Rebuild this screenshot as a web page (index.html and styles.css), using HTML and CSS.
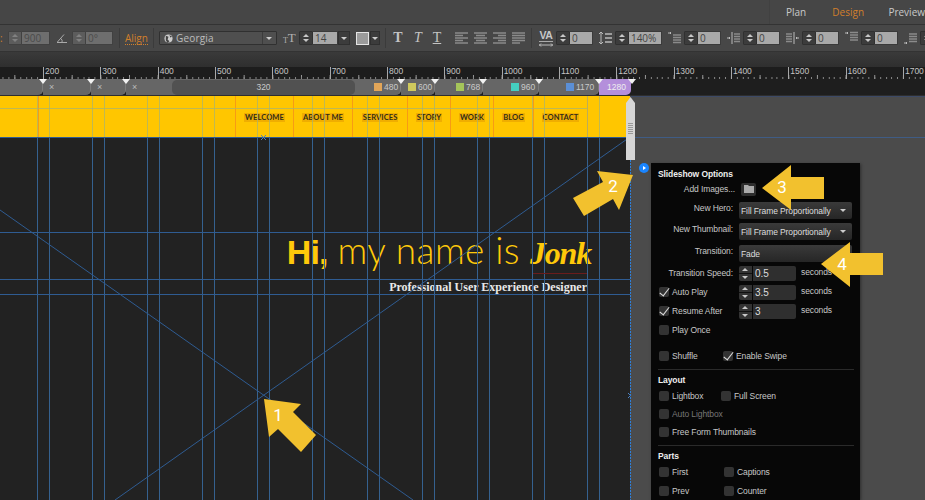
FILE: index.html
```html
<!DOCTYPE html>
<html lang="en">
<head>
<meta charset="utf-8">
<title>Slideshow Options</title>
<link rel="stylesheet" href="styles.css">
</head>
<body>
<div class="app">
  <header class="topbar">
    <nav class="modes">
      <span class="mode mode-plan">Plan</span>
      <span class="mode mode-design">Design</span>
      <span class="mode mode-preview">Preview</span>
    </nav>
  </header>

  <div class="toolbar">
    <span class="orange-label">:</span>
    <span class="spin spin-dim"></span><span class="field field-dim w-28">900</span>
    <svg class="ico ml-7 i-10" viewBox="0 0 10 10"><path d="M0 9.500h10M0 9.500l7-8M5 9.500a4 4 0 0 0-1-4" fill="none" stroke="#aaa"/></svg>
    <span class="spin spin-dim ml-5"></span><span class="field field-dim w-27">0°</span>
    <span class="sep ml-6"></span>
    <span class="align-link ml-5">Align</span>
    <span class="sep ml-5"></span>
    <div class="font-select ml-5">
      <svg class="globe" viewBox="0 0 10 10"><circle cx="5" cy="5" r="4.500" fill="#ccc"/><path d="M2 2l3 1-1 3 2 2-2 2-2-3zM6 1l3 2-2 1z" fill="#444"/></svg>
      <span class="font-name">Georgia</span>
      <span class="font-caret"><i class="caret"></i></span>
    </div>
    <span class="tt-icon ml-6"><b class="tt-small">T</b><b class="tt-big">T</b></span>
    <span class="spin ml-3"></span><span class="field w-25">14</span><span class="drop"><i class="caret"></i></span>
    <span class="swatch ml-6"></span><span class="drop drop-small ml-1"><i class="caret"></i></span>
    <span class="sep ml-5"></span>
    <span class="type-t ml-6 type-bold">T</span>
    <span class="type-t ml-8 type-italic">T</span>
    <span class="type-t ml-7 type-under">T</span>
    <svg class="align-ico ml-12" viewBox="0 0 13 13"><path d="M0 1h13M0 3.500h8M0 6h13M0 8.500h8M0 11h13" stroke="#8b8b8b" stroke-width="1.500"/></svg>
    <svg class="align-ico ml-6" viewBox="0 0 13 13"><path d="M0 1h13M2 3.500h9M0 6h13M2 8.500h9M0 11h13" stroke="#8b8b8b" stroke-width="1.500"/></svg>
    <svg class="align-ico ml-6" viewBox="0 0 13 13"><path d="M0 1h13M5 3.500h8M0 6h13M5 8.500h8M0 11h13" stroke="#8b8b8b" stroke-width="1.500"/></svg>
    <svg class="align-ico ml-6" viewBox="0 0 13 13"><path d="M0 1h13M0 3.500h13M0 6h13M0 8.500h13M0 11h8" stroke="#8b8b8b" stroke-width="1.500"/></svg>
    <span class="sep ml-6"></span>
    <span class="va-icon ml-7"><span class="va-text">VA</span><svg class="va-arrow" viewBox="0 0 14 4"><path d="M0 2h14M2 .5L.5 2 2 3.500M12 .5L13.500 2 12 3.500" fill="none" stroke="#bbb"/></svg></span>
    <span class="spin ml-3"></span><span class="field w-23">0</span>
    <svg class="para-ico ml-6" viewBox="0 0 13 14"><path d="M2 1v12M0 3l2-2 2 2M0 11l2 2 2-2" fill="none" stroke="#bbb"/><path d="M6 3h7M6 7h7M6 11h7" stroke="#bbb" stroke-width="1.300"/></svg>
    <span class="spin ml-3"></span><span class="field w-33">140%</span>
    <svg class="para-ico ml-6" viewBox="0 0 13 14"><path d="M0 2h3M2 1l1 1-1 1" fill="none" stroke="#bbb"/><path d="M5 4h8M5 6.500h8M5 9h8M5 11.500h8" stroke="#8b8b8b" stroke-width="1.400"/></svg>
    <span class="spin ml-3"></span><span class="field w-23">0</span>
    <svg class="para-ico ml-6" viewBox="0 0 13 14"><path d="M0 7h3M2 6l1 1-1 1M5 1v12" fill="none" stroke="#bbb"/><path d="M7 3h6M7 5.500h6M7 8h6M7 10.500h6" stroke="#8b8b8b" stroke-width="1.400"/></svg>
    <span class="spin ml-3"></span><span class="field w-23">0</span>
    <svg class="para-ico ml-6" viewBox="0 0 13 14"><path d="M13 7h-3M11 6l-1 1 1 1M8 1v12" fill="none" stroke="#bbb"/><path d="M0 3h6M0 5.500h6M0 8h6M0 10.500h6" stroke="#8b8b8b" stroke-width="1.400"/></svg>
    <span class="spin ml-3"></span><span class="field w-23">0</span>
    <svg class="para-ico ml-6" viewBox="0 0 13 14"><path d="M0 2h3M2 1l1 1-1 1" fill="none" stroke="#bbb"/><path d="M5 1.500h8M5 4h8M5 6.500h8M5 9h8" stroke="#8b8b8b" stroke-width="1.400"/></svg>
    <span class="spin ml-3"></span><span class="field w-23">0</span>
    <svg class="para-ico ml-6" viewBox="0 0 13 14"><path d="M0 12h3M2 11l1 1-1 1" fill="none" stroke="#bbb"/><path d="M5 3h8M5 5.500h8M5 8h8M5 10.500h8" stroke="#8b8b8b" stroke-width="1.400"/></svg>
    <span class="spin ml-3"></span>
  </div>

  <div class="subbar"></div>

  <div class="ruler">
    <span class="mark">200</span><span class="mark">300</span><span class="mark">400</span><span class="mark">500</span>
    <span class="mark">600</span><span class="mark">700</span><span class="mark">800</span><span class="mark">900</span>
    <span class="mark">1000</span><span class="mark">1100</span><span class="mark">1200</span><span class="mark">1300</span>
    <span class="mark">1400</span><span class="mark">1500</span><span class="mark">1600</span><span class="mark">1700</span>
  </div>

  <div class="breakpoints">
    <div class="bp bp-lead"></div>
    <div class="bp bp-a"><span class="bp-x">×</span></div>
    <div class="bp bp-b"><span class="bp-x">×</span></div>
    <div class="bp bp-c"><span class="bp-x">×</span><span class="pill">320</span><i class="sw sw-480"></i><span class="bp-num">480</span></div>
    <div class="bp bp-d"><i class="sw sw-600"></i><span class="bp-num">600</span></div>
    <div class="bp bp-e"><i class="sw sw-768"></i><span class="bp-num">768</span></div>
    <div class="bp bp-f"><i class="sw sw-960"></i><span class="bp-num">960</span></div>
    <div class="bp bp-g"><i class="sw sw-1170"></i><span class="bp-num">1170</span></div>
    <div class="bp bp-h"><span class="bp-num">1280</span></div>
    <div class="bp-rest"></div>
  </div>

  <main class="workspace">
    <section class="canvas">
      <div class="site-header">
        <span></span>
        <span class="nav-cell"></span>
        <span class="nav-cell"><b>WELCOME</b></span>
        <span class="nav-cell"><b>ABOUT ME</b></span>
        <span class="nav-cell"><b>SERVICES</b></span>
        <span class="nav-cell"><b>STORY</b></span>
        <span class="nav-cell"><b>WORK</b></span>
        <span class="nav-cell"><b>BLOG</b></span>
        <span class="nav-cell"><b>CONTACT</b></span>
        <span class="nav-cell"></span>
      </div>
      <div class="hero">
        <h1 class="hero-title"><strong class="hero-hi">Hi,</strong> <span class="hero-light">my name is</span> <em class="hero-name">Jonk</em></h1>
        <p class="hero-sub">Professional User Experience Designer</p>
      </div>
      <svg class="guides" width="631" height="404" viewBox="0 0 631 404">
        <path class="col-top" d="M37.500 0V41M49.500 0V41M92.500 0V41M104.500 0V41M147.500 0V41M159.500 0V41M202.500 0V41M214.500 0V41M257.500 0V41M269.500 0V41M312.500 0V41M324.500 0V41M367.500 0V41M379.500 0V41M422.500 0V41M434.500 0V41M477.500 0V41M489.500 0V41M532.500 0V41M544.500 0V41M587.500 0V41M599.500 0V41"/>
        <path class="col-main" d="M37.500 41V404M49.500 41V404M92.500 41V404M104.500 41V404M147.500 41V404M159.500 41V404M202.500 41V404M214.500 41V404M257.500 41V404M269.500 41V404M312.500 41V404M324.500 41V404M367.500 41V404M379.500 41V404M422.500 41V404M434.500 41V404M477.500 41V404M489.500 41V404M532.500 41V404M544.500 41V404M587.500 41V404M599.500 41V404"/>
        <path class="col-top" d="M0 12.500H587"/>
        <path class="line" d="M0 41.500H630M0 136.500H630M0 183.500H630M0 198.500H630"/>
        <path class="line" d="M0 114L413 404M115 404L630 41"/>
        <path class="line-red" d="M533 177.500H587"/>
        <path class="line-x" d="M261 39l5 5M266 39l-5 5M628 297l5 5M633 297l-5 5"/>
        <path class="line-edge" d="M630.500 64V404"/>
      </svg>
    </section>

    <aside class="side">
      <div class="options">
        <h2 class="opt-title">Slideshow Options</h2>
        <div class="opt-row opt-add">
          <span class="opt-label">Add Images...</span>
          <span class="folder-btn"><svg viewBox="0 0 10 8" class="folder"><path d="M0 0h4l1 1h5v7H0z" fill="#aaa"/></svg></span>
        </div>
        <div class="opt-row opt-sel"><span class="opt-label">New Hero:</span><span class="select">Fill Frame Proportionally<i class="caret"></i></span></div>
        <div class="opt-row opt-sel gap-4"><span class="opt-label">New Thumbnail:</span><span class="select">Fill Frame Proportionally<i class="caret"></i></span></div>
        <div class="opt-row opt-sel"><span class="opt-label">Transition:</span><span class="select">Fade<i class="caret"></i></span></div>
        <div class="opt-row opt-num gap-4"><span class="opt-label">Transition Speed:</span><span class="spin spin-black"></span><span class="num">0.5</span><span class="unit">seconds</span></div>
        <div class="opt-row opt-num gap-4"><span class="check-label"><i class="box on"></i>Auto Play</span><span class="spin spin-black"></span><span class="num">3.5</span><span class="unit">seconds</span></div>
        <div class="opt-row opt-num gap-4"><span class="check-label"><i class="box on"></i>Resume After</span><span class="spin spin-black"></span><span class="num">3</span><span class="unit">seconds</span></div>
        <div class="check-row gap-3"><span class="check-label"><i class="box"></i>Play Once</span></div>
        <div class="check-row gap-10"><span class="check-label col-64"><i class="box"></i>Shuffle</span><span class="check-label"><i class="box on"></i>Enable Swipe</span></div>
        <hr class="rule">
        <h2 class="opt-title sec">Layout</h2>
        <div class="check-row"><span class="check-label col-62"><i class="box"></i>Lightbox</span><span class="check-label"><i class="box"></i>Full Screen</span></div>
        <div class="check-row gap-2 dim"><span class="check-label"><i class="box"></i>Auto Lightbox</span></div>
        <div class="check-row gap-2"><span class="check-label"><i class="box"></i>Free Form Thumbnails</span></div>
        <hr class="rule">
        <h2 class="opt-title sec">Parts</h2>
        <div class="check-row"><span class="check-label col-65"><i class="box"></i>First</span><span class="check-label"><i class="box"></i>Captions</span></div>
        <div class="check-row gap-3"><span class="check-label col-65"><i class="box"></i>Prev</span><span class="check-label"><i class="box"></i>Counter</span></div>
      </div>
    </aside>

    <div class="handle"><span class="grip"></span></div>
    <span class="dot"></span>
  </main>

  <svg class="callouts" width="925" height="500" viewBox="0 0 925 500">
    <polygon points="264,399 301,404 293,412 316,435 301,452 278,429 269,437"/>
    <polygon points="633,175 597,171 603,182 573,198 584,216 613,199 619,210"/>
    <polygon points="762,188 791,165 791,177 824,177 824,199 791,199 791,210"/>
    <polygon points="821,264 850,242 850,253 883,253 883,275 850,275 850,287"/>
    <text x="278" y="421">1</text>
    <text x="613" y="192">2</text>
    <text x="782" y="193">3</text>
    <text x="842" y="270">4</text>
  </svg>
</div>
</body>
</html>
```
FILE: styles.css
```css
* { box-sizing: border-box; }
html, body { margin: 0; padding: 0; }
body { width: 925px; height: 500px; overflow: hidden; background: #4b4b4b; font-family: "Open Sans", "Liberation Sans", sans-serif; }
.app { position: relative; width: 925px; height: 500px; overflow: hidden; }
i { display: block; font-style: normal; }

/* top bar */
.topbar { height: 25px; background: #464646; border-bottom: 1px solid #333; display: flex; justify-content: flex-end; }
.modes { width: 156px; flex: none; border-left: 1px solid #414141; display: flex; align-items: center; padding-left: 16px; white-space: nowrap; font-size: 10px; }
.mode { color: #c9c9c9; }
.mode-plan { width: 48px; }
.mode-design { width: 58px; color: #d17f2b; }

/* toolbar */
.toolbar { height: 27px; background: #474747; border-bottom: 1px solid #333; display: flex; align-items: center; white-space: nowrap; overflow: hidden; }
.ml-1 { margin-left: 1px; } .ml-3 { margin-left: 3px; } .ml-5 { margin-left: 5px; } .ml-6 { margin-left: 6px; }
.ml-7 { margin-left: 7px; } .ml-8 { margin-left: 8px; } .ml-12 { margin-left: 12px; }
.w-23 { width: 23px; } .w-25 { width: 25px; } .w-27 { width: 27px; } .w-28 { width: 28px; } .w-33 { width: 33px; }
.orange-label { width: 8px; flex: none; color: #d17f2b; font-size: 10px; line-height: 14px; }
.spin { position: relative; flex: none; display: block; width: 14px; height: 14px; background: linear-gradient(#3c3c3c 0 50%, #2c2c2c 50% 53%, #3c3c3c 53%); border: 1px solid #303030; border-radius: 1px; }
.spin::before, .spin::after { content: ""; position: absolute; left: 3px; border-left: 3px solid transparent; border-right: 3px solid transparent; }
.spin::before { top: 2px; border-bottom: 3px solid #c8c8c8; }
.spin::after { bottom: 2px; border-top: 3px solid #c8c8c8; }
.spin-dim { background: linear-gradient(#5c5c5c 0 50%, #3e3e3e 50% 53%, #5c5c5c 53%); border-color: #414141; }
.spin-dim::before { border-bottom-color: #818181; }
.spin-dim::after { border-top-color: #818181; }
.field { flex: none; height: 14px; background: #a9a9a9; color: #444; font-size: 10px; line-height: 13px; padding-left: 2px; border: 1px solid #3a3a3a; border-left: 0; border-radius: 0 1px 1px 0; }
.field-dim { background: #6e6e6e; color: #4b4b4b; border-color: #414141; }
.ico { flex: none; }
.i-10 { width: 10px; height: 10px; }
.sep { flex: none; width: 1px; height: 20px; background: #3b3b3b; }
.align-link { flex: none; color: #d17f2b; font-size: 10px; line-height: 12px; border-bottom: 1px dotted #d17f2b; }
.font-select { flex: none; width: 118px; height: 14px; display: flex; align-items: center; background: #4f4f4f; border: 1px solid #303030; border-radius: 1px; padding-left: 4px; }
.globe { width: 9px; height: 9px; flex: none; }
.font-name { color: #bcbcbc; font-size: 10px; margin-left: 3px; letter-spacing: .2px; flex: 1; }
.font-caret { width: 14px; height: 12px; flex: none; border-left: 1px solid #3c3c3c; display: flex; align-items: center; justify-content: center; }
.caret { width: 0; height: 0; flex: none; border-left: 3px solid transparent; border-right: 3px solid transparent; border-top: 3px solid #ccc; }
.tt-icon { flex: none; width: 13px; height: 14px; display: flex; align-items: flex-end; font-family: "Liberation Serif", serif; color: #b0b0b0; }
.tt-small { font-size: 8px; line-height: 9px; font-weight: 400; }
.tt-big { font-size: 13px; line-height: 14px; font-weight: 400; }
.drop { flex: none; width: 12px; height: 14px; background: #3c3c3c; border: 1px solid #303030; display: flex; align-items: center; justify-content: center; }
.drop-small { width: 10px; }
.swatch { flex: none; width: 13px; height: 13px; background: #9b9b9b; border: 1px solid #e5e5e5; }
.type-t { flex: none; width: 12px; text-align: center; font-family: "Liberation Serif", serif; font-size: 14px; line-height: 14px; color: #c4c4c4; }
.type-bold { font-weight: 700; }
.type-italic { font-style: italic; }
.type-under { text-decoration: underline; text-underline-offset: 1px; }
.align-ico { flex: none; width: 13px; height: 13px; }
.va-icon { flex: none; width: 14px; height: 17px; display: flex; flex-direction: column; }
.va-text { font-family: "Liberation Sans", sans-serif; font-weight: 700; font-size: 10.500px; line-height: 11px; color: #c8c8c8; border-bottom: 1px solid #aaa; letter-spacing: -.4px; text-align: center; }
.va-arrow { width: 14px; height: 4px; margin-top: 1px; }
.para-ico { flex: none; width: 13px; height: 14px; }

.subbar { height: 15px; background: linear-gradient(#3a3a3a, #2f2f2f); }

/* ruler */
.ruler { height: 12px; background-color: #1d1d1d; padding-left: 43px; display: flex; overflow: hidden;
  background-image: repeating-linear-gradient(90deg, #888 0 1px, transparent 1px 5.733px), repeating-linear-gradient(90deg, #999 0 1px, transparent 1px 28.667px);
  background-size: 57.333px 2px, 57.333px 4px; background-position: 43px bottom, 43px bottom; background-repeat: repeat-x; }
.mark { flex: none; width: 57.333px; border-left: 1px solid #a8a8a8; padding-left: 1px; font-size: 8.500px; line-height: 8px; color: #c4c4c4; white-space: nowrap; font-family: "Liberation Sans", sans-serif; }

/* breakpoints */
.breakpoints { height: 17px; display: flex; background: #1e1e1e; border-bottom: 1px solid #2e2e2e; font-size: 8.500px; color: #c9c9c9; font-family: "Liberation Sans", sans-serif; }
.bp { position: relative; flex: none; display: flex; align-items: center; height: 16px; background: #666; border-right: 1px solid #7c7c7c; border-radius: 0 0 5px 0; }
.bp::after { content: ""; position: absolute; z-index: 2; right: -5px; top: 0; border-left: 4.500px solid transparent; border-right: 4.500px solid transparent; border-top: 5px solid #f2f2f2; }
.bp-lead { width: 43px; }
.bp-a { width: 48px; }
.bp-b { width: 35px; }
.bp-c { width: 275px; }
.bp-d { width: 34px; }
.bp-e { width: 48px; }
.bp-f { width: 56px; }
.bp-g { width: 60px; }
.bp-h { width: 32px; background: #b48fdb; color: #eee; border-right: 0; padding-left: 8px; }
.bp-rest { flex: 1; }
.bp-x { width: 46px; padding-left: 6px; font-size: 9px; color: #bbb; flex: none; }
.bp-a .bp-x, .bp-b .bp-x { width: auto; }
.pill { width: 183px; flex: none; height: 15px; line-height: 15px; text-align: center; background: #515151; border-radius: 5px; }
.sw { width: 8px; height: 8px; flex: none; margin-left: 7px; }
.pill + .sw { margin-left: 19px; }
.bp-num { margin-left: 2px; white-space: nowrap; }
.bp-h .bp-num { margin-left: 0; }
.sw-480 { background: #e2a659; }
.sw-600 { background: #cfc95d; }
.sw-768 { background: #a5c55a; margin-left: 21px; }
.sw-960 { background: #45cfc0; margin-left: 28px; }
.sw-1170 { background: #5b8fd6; margin-left: 27px; }

/* workspace */
.workspace { position: relative; height: 404px; display: flex; background: #4b4b4b; }
.canvas { position: relative; flex: none; width: 631px; height: 404px; background: linear-gradient(90deg, #222 0 630px, #4b4b4b 630px); overflow: hidden; }
.site-header { height: 41px; width: 630px; background: #ffc600; display: grid; grid-template-columns: 38px 197px 58px 59px 55px 43px 43px 40px 54px 1fr; }
.nav-cell { display: flex; align-items: center; justify-content: center; padding-top: 2px; border-left: 1px solid #f79b14; }
.nav-cell b { background: #f0ae00; color: #332d1a; font-family: "Lato", sans-serif; font-size: 7.500px; font-weight: 700; letter-spacing: .1px; line-height: 9px; padding: 0 1px; white-space: nowrap; }
.hero { display: flex; flex-direction: column; align-items: flex-end; padding: 92px 40px 0 0; }
.hero-title { margin: 0; display: flex; align-items: baseline; gap: 10px; font-weight: 400; color: #ffc90a; font-size: 37px; line-height: 42px; white-space: nowrap; font-family: "Liberation Sans", sans-serif; }
.hero-hi { font-size: 34px; letter-spacing: -.9px; }
.hero-light { font-family: "Lato", sans-serif; font-weight: 300; letter-spacing: .4px; }
.hero-name { font-family: "Liberation Serif", serif; font-style: italic; font-weight: 700; font-size: 32px; letter-spacing: -1.200px; }
.hero-sub { margin: 5px 4px 0 0; font-family: "Liberation Serif", serif; font-weight: 700; font-size: 12px; line-height: 16px; color: #e8e8e8; }
.guides { position: absolute; left: 0; top: 0; pointer-events: none; }
.col-top { stroke: #a9b36e; stroke-width: 1; fill: none; opacity: .75; }
.col-main { stroke: #35618f; stroke-width: 1; fill: none; shape-rendering: crispEdges; }
.line { stroke: #2f5c92; stroke-width: 1; fill: none; }
.line-red { stroke: #6a1c1c; stroke-width: 1; fill: none; }
.line-x { stroke: #4a80c0; stroke-width: 1; fill: none; }
.line-edge { stroke: #2f7fd8; stroke-width: 1; stroke-dasharray: 2 1; fill: none; }

/* side */
.side { flex: 1; padding-left: 20px; padding-top: 67px; background: linear-gradient(#3d4a66, #3d4a66) 0 0 / 100% 1px no-repeat, linear-gradient(#3f5c85, #3f5c85) 0 41px / 100% 1px no-repeat; }
.options { width: 209px; height: 337px; background: #070707; box-shadow: 1px 1px 3px rgba(0,0,0,.4); padding: 5px 8px 0 7px; font-family: "Liberation Sans", sans-serif; font-size: 8.500px; letter-spacing: -.1px; color: #c8c8c8; overflow: hidden; white-space: nowrap; }
.opt-title { margin: 0; height: 12px; line-height: 12px; font-size: 8.500px; font-weight: 700; color: #eee; }
.opt-title.sec { margin-top: 2px; height: 16px; line-height: 16px; }
.opt-row { display: flex; align-items: center; }
.opt-label { width: 75px; flex: none; text-align: right; }
.opt-add { height: 16px; margin-top: 1px; margin-bottom: 5px; }
.opt-add .opt-label { width: 77px; }
.folder-btn { margin-left: 6px; width: 15px; height: 13px; background: #2e2e2e; border-radius: 2px; display: flex; align-items: center; justify-content: center; }
.folder { width: 10px; height: 8px; }
.opt-sel { height: 17px; margin-bottom: 5px; }
.opt-sel.gap-4 { margin-top: -1px; }
.opt-sel .opt-label { position: relative; top: -3px; }
.select { margin-left: 6px; width: 113px; height: 17px; background: linear-gradient(#3a3a3a, #262626); border-radius: 2px; display: flex; align-items: center; justify-content: space-between; padding: 0 3px 0 2px; color: #ddd; }
.select .caret { margin-right: 3px; }
.opt-num { height: 15px; }
.opt-num.gap-4 { margin-top: 4px; }
.opt-sel + .opt-num.gap-4 { margin-top: -1px; }
.opt-num .opt-label, .opt-num .check-label { position: relative; top: -1px; }
.opt-num .check-label { width: 75px; flex: none; }
.spin-black { margin-left: 6px; width: 13px; height: 15px; background: linear-gradient(#333 0 48%, #111 48% 54%, #333 54%); border: 0; border-radius: 2px 0 0 2px; }
.num { margin-left: 1px; width: 43px; height: 15px; line-height: 15px; background: #2f2f2f; color: #ddd; padding-left: 2px; font-size: 10px; border-radius: 0 2px 2px 0; }
.unit { margin-left: 5px; position: relative; top: -2px; }
.check-row { display: flex; height: 16px; align-items: center; }
.check-row.gap-2 { margin-top: 2px; }
.check-row.gap-3 { margin-top: 3px; }
.check-row.gap-10 { margin-top: 10px; }
.check-label { display: flex; align-items: center; }
.col-62 { width: 62px; }
.col-64 { width: 64px; }
.col-65 { width: 65px; }
.dim { color: #777; }
.box { position: relative; flex: none; width: 10px; height: 10px; margin: 0 3px 0 1px; background: #333; border-radius: 2px; }
.box.on::after { content: ""; position: absolute; left: 3px; top: -1px; width: 4px; height: 9px; border: solid #ddd; border-width: 0 1.500px 1.500px 0; transform: rotate(38deg); }
.rule { margin: 5px 0 0; width: 196px; height: 1px; border: 0; background: #2a2a2a; }

/* overlays */
.handle { position: absolute; left: 626px; top: 1px; width: 9px; height: 63px; background: #d6d6d6; clip-path: polygon(50% 0, 100% 6px, 100% 100%, 0 100%, 0 6px); display: flex; justify-content: center; align-items: flex-start; }
.grip { margin-top: 26px; width: 5px; height: 12px; background: repeating-linear-gradient(#999 0 1px, transparent 1px 2px); }
.dot { position: absolute; left: 639px; top: 67px; width: 10px; height: 10px; border-radius: 50%; background: #1a85ff; }
.dot::after { content: ""; position: absolute; left: 4px; top: 3px; border-left: 3px solid #fff; border-top: 2px solid transparent; border-bottom: 2px solid transparent; }
.callouts { position: absolute; left: 0; top: 0; pointer-events: none; }
.callouts polygon { fill: #f2c12e; }
.callouts text { fill: #fff; font-family: "Roboto", sans-serif; font-size: 17px; font-weight: 400; text-anchor: middle; }
```
